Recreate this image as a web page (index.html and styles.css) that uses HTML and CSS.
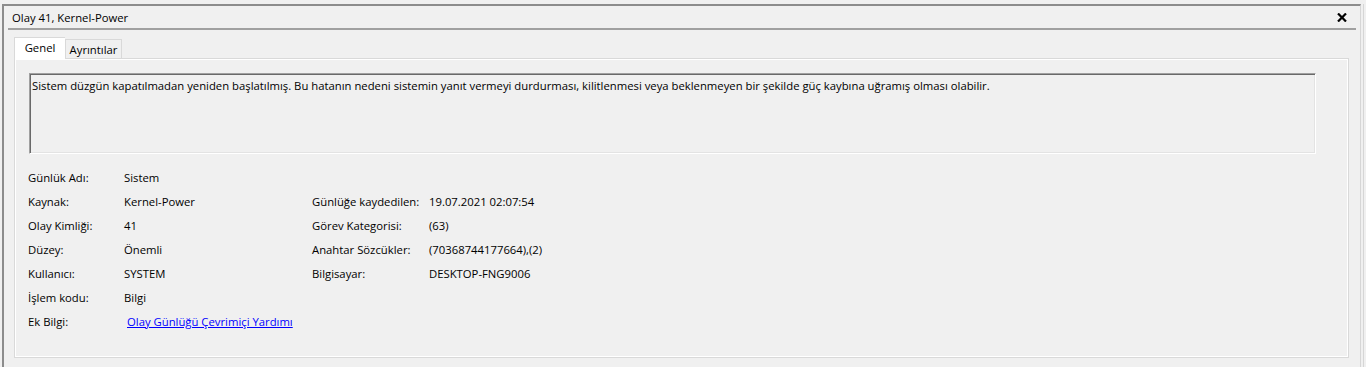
FILE: index.html
```html
<!DOCTYPE html>
<html lang="tr">
<head>
  <meta charset="UTF-8" />
  <title>Olay 41, Kernel-Power</title>
  <link rel="stylesheet" href="styles.css">
</head>
<body>
  <div class="window">
    <div class="titlebar">
      <span class="title">Olay 41, Kernel-Power</span>
      <svg class="close" width="10" height="9" viewBox="0 0 10 9">
        <path d="M1 0.5 L9 8.5 M9 0.5 L1 8.5" stroke="#000" stroke-width="2.2" />
      </svg>
    </div>

    <div class="tabs">
      <div class="tab active">Genel</div>
      <div class="tab">Ayrıntılar</div>
    </div>

    <div class="panel">
      <div class="description">Sistem düzgün kapatılmadan yeniden başlatılmış. Bu hatanın nedeni sistemin yanıt vermeyi durdurması, kilitlenmesi veya beklenmeyen bir şekilde güç kaybına uğramış olması olabilir.</div>

      <div class="fields">
        <span>Günlük Adı:</span><span>Sistem</span><span></span><span></span>
        <span>Kaynak:</span><span>Kernel-Power</span><span>Günlüğe kaydedilen:</span><span>19.07.2021 02:07:54</span>
        <span>Olay Kimliği:</span><span>41</span><span>Görev Kategorisi:</span><span>(63)</span>
        <span>Düzey:</span><span>Önemli</span><span>Anahtar Sözcükler:</span><span>(70368744177664),(2)</span>
        <span>Kullanıcı:</span><span>SYSTEM</span><span>Bilgisayar:</span><span>DESKTOP-FNG9006</span>
        <span>İşlem kodu:</span><span>Bilgi</span><span></span><span></span>
        <span>Ek Bilgi:</span><span><a href="#" class="help-link">Olay Günlüğü Çevrimiçi Yardımı</a></span><span></span><span></span>
      </div>
    </div>
  </div>
</body>
</html>
```

FILE: styles.css
```css
body {
  margin: 0;
  background-color: #f0f0f0;
  font-family: 'Open Sans', 'Noto Sans', sans-serif;
  font-size: 11.3px;
  color: #000;
}

.window {
  margin: 4px 0 0 2px;
  width: 1356px;
  height: 361px;
  border-top: 2px solid #8c8c8c;
  border-left: 2px solid #8c8c8c;
  border-right: 1px solid #d6d6d6;
  box-shadow: 2px 0 0 #f0f0f0, 3px 0 0 #d6d6d6;
}

.titlebar {
  margin: 0 4px;
  height: 22px;
  border-bottom: 2px solid #a0a0a0;
  padding: 0 9px 0 4px;
  display: flex;
  justify-content: space-between;
  align-items: center;
}

.close {
  display: block;
  margin-top: 1px;
}

.tabs {
  display: flex;
  align-items: flex-end;
  height: 21px;
  margin: 7px 0 0 10px;
}

.tab {
  height: 19px;
  border: 1px solid #d9d9d9;
  border-bottom: none;
  box-sizing: border-box;
  display: flex;
  align-items: center;
  justify-content: center;
  width: 57px;
}

.tab.active {
  width: 51px;
  height: 22px;
  margin-bottom: -1px;
  padding-bottom: 2px;
  background-color: #fff;
  border-right: none;
  position: relative;
  z-index: 1;
}

.panel {
  margin: 0 11px 0 10px;
  height: 300px;
  box-sizing: border-box;
  border: 1px solid #d9d9d9;
  box-shadow: inset 1px 1px 0 #fff, inset -1px -1px 0 #fff;
  padding: 14px 0 0 14px;
}

.description {
  width: 1287px;
  height: 81px;
  box-sizing: border-box;
  border: 1px solid;
  border-color: #a0a0a0 #fff #fff #a0a0a0;
  box-shadow: inset 1px 1px 0 #696969, inset -1px -1px 0 #e3e3e3;
  padding: 4px 2px;
  line-height: 15px;
}

.fields {
  display: grid;
  grid-template-columns: 96px 188px 117px auto;
  grid-auto-rows: 24px;
  align-items: center;
  margin: 11px 0 0 -1px;
}

.help-link {
  color: #0000ff;
  padding-left: 3px;
}
```
